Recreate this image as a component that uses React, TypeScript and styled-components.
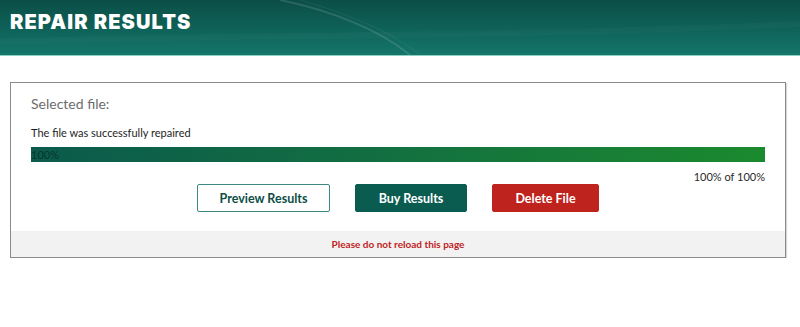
import React from "react";
import styled, { createGlobalStyle } from "styled-components";

const GlobalStyle = createGlobalStyle`
    body {
        margin: 0;
        background: #ffffff;
        font-family: Lato, "Open Sans", sans-serif;
    }
`

const Page = styled.div`
    width: 800px;
    display: flex;
    flex-direction: column;
`

const Banner = styled.header`
    position: relative;
    height: 55px;
    overflow: hidden;
    background: linear-gradient(180deg, #0b4e47 0%, #0f6359 55%, #15766a 100%);
    border-bottom: 1px solid #8fd0c6;
    padding: 0 10px;
    display: flex;
    align-items: flex-start;
`

const BannerArt = styled.svg`
    position: absolute;
    inset: 0;
    pointer-events: none;
`

const Title = styled.h1`
    position: relative;
    margin: 10px 0 0;
    font-family: Inter, "DejaVu Sans", sans-serif;
    font-weight: 900;
    font-size: 20px;
    letter-spacing: 1.1px;
    color: #ffffff;
`

const Card = styled.section`
    margin: 26px 14px 0 10px;
    border: 1px solid #8a8a8a;
    box-shadow: 1px 1px 1px rgba(0, 0, 0, 0.15);
    display: flex;
    flex-direction: column;
`

const Body = styled.div`
    padding: 12px 20px 19px 20px;
    display: flex;
    flex-direction: column;
`

const Label = styled.div`
    font-size: 14px;
    color: #6b6b6b;
    margin-bottom: 14px;
`

const Status = styled.div`
    font-size: 11px;
    color: #1e1e1e;
    margin-bottom: 8px;
`

const Track = styled.div`
    height: 15px;
    background: #e6e6e6;
`

const Fill = styled.div`
    height: 100%;
    background: linear-gradient(90deg, #0b5a4c 0%, #137040 50%, #1b8a2e 100%);
    font-size: 11px;
    line-height: 15px;
    color: #06352c;
`

const Count = styled.div`
    align-self: flex-end;
    font-size: 11px;
    color: #2a2a2a;
    margin-top: 8px;
`

const Actions = styled.div`
    display: flex;
    justify-content: center;
    gap: 25px;
    margin-top: 1px;
`

const Button = styled.button<{ $variant: "outline" | "primary" | "danger", $w: number }>`
    width: ${ p => p.$w }px;
    height: 28px;
    border-radius: 2px;
    font-family: Lato, "Open Sans", sans-serif;
    font-weight: 700;
    font-size: 12.5px;
    cursor: pointer;
    border: 1px solid ${ p => p.$variant == "outline" ? "#3c8a82" : p.$variant == "primary" ? "#0a5c50" : "#bf231d" };
    background: ${ p => p.$variant == "outline" ? "#ffffff" : p.$variant == "primary" ? "#0a5c50" : "#bf231d" };
    color: ${ p => p.$variant == "outline" ? "#0e4f47" : "#ffffff" };
`

const Footer = styled.div`
    background: #f2f2f2;
    height: 26px;
    display: flex;
    align-items: center;
    justify-content: center;
    font-size: 10px;
    font-weight: 700;
    color: #c0221e;
`

export default function App () {
    const progress = 100
    return (
        <Page>
            <GlobalStyle/>
            <Banner>
                <BannerArt width="800" height="55" viewBox="0 0 800 55">
                    <path d="M280 0 C330 10 380 30 410 55" stroke="rgba(255,255,255,0.12)" strokeWidth="2" fill="none"/>
                    <path d="M300 0 C350 14 395 34 420 55" stroke="rgba(255,255,255,0.06)" strokeWidth="1" fill="none"/>
                    <path d="M0 42 C200 34 500 38 800 24" stroke="rgba(255,255,255,0.025)" strokeWidth="6" fill="none"/>
                </BannerArt>
                <Title>REPAIR RESULTS</Title>
            </Banner>
            <Card>
                <Body>
                    <Label>Selected file:</Label>
                    <Status>The file was successfully repaired</Status>
                    <Track>
                        <Fill style={{ width: `${ progress }%` }}>{ progress }%</Fill>
                    </Track>
                    <Count>{ progress }% of 100%</Count>
                    <Actions>
                        <Button $variant="outline" $w={ 133 }>Preview Results</Button>
                        <Button $variant="primary" $w={ 112 }>Buy Results</Button>
                        <Button $variant="danger" $w={ 107 }>Delete File</Button>
                    </Actions>
                </Body>
                <Footer>Please do not reload this page</Footer>
            </Card>
        </Page>
    )
}
